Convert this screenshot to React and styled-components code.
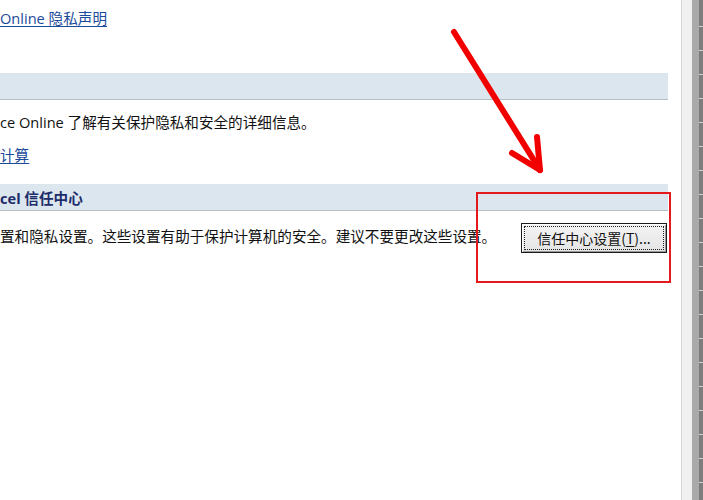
import React from 'react'
import styled, { createGlobalStyle } from 'styled-components'

const GlobalStyle = createGlobalStyle`
  html, body {
    margin: 0;
    padding: 0;
    background: #ffffff;
  }

  body {
    font-family: "Open Sans", "Noto Sans CJK SC", sans-serif;
    color: #111111;
  }
`

const Screen = styled.div`
  position: relative;
  display: flex;
  width: 703px;
  height: 500px;
  overflow: hidden;
  background: #ffffff;
`

const Panel = styled.div`
  display: flex;
  flex-direction: column;
  width: 668px;
  flex-shrink: 0;
  padding-top: 8px;
  box-sizing: border-box;
`

const TextLink = styled.a`
  display: block;
  align-self: flex-start;
  margin-top: ${p => p.$top || 0}px;
  font-size: 14.6px;
  line-height: 20px;
  color: #1b4b9b;
  text-decoration: underline;
  text-underline-offset: 2px;
  cursor: pointer;
  white-space: nowrap;
`

const SectionHeader = styled.div`
  display: flex;
  align-items: center;
  height: 26px;
  margin-top: ${p => p.$top || 0}px;
  background: #dce6ee;
  border-bottom: 1px solid #b6c1ca;
  font-size: 14.6px;
  font-weight: 700;
  color: #1c2c6a;
  white-space: nowrap;
`

const Paragraph = styled.div`
  margin-top: ${p => p.$top || 0}px;
  font-size: 14.6px;
  line-height: 20px;
  white-space: nowrap;
`

const SettingRow = styled.div`
  display: flex;
  align-items: center;
  justify-content: space-between;
  margin-top: 12px;
  padding-right: 1px;
`

const RowText = styled.span`
  font-size: 14.6px;
  line-height: 20px;
  white-space: nowrap;
  margin-top: -4px;
`

const DialogButton = styled.button`
  position: relative;
  width: 146px;
  height: 30px;
  padding: 0;
  border: 1px solid #1a1a1a;
  box-shadow: inset 1px 1px 0 #ffffff, inset -1px -1px 0 #9a9a9a;
  background: linear-gradient(#f4f4f4, #e4e4e4);
  font-family: "Noto Sans CJK SC", sans-serif;
  font-size: 14px;
  color: #111111;
  cursor: pointer;

  &::after {
    content: '';
    position: absolute;
    inset: 2px;
    border: 1px dotted #222222;
    pointer-events: none;
  }

  u {
    text-underline-offset: 2px;
  }
`

const Gutter = styled.div`
  width: 13px;
  flex-shrink: 0;
  border-right: 1px solid #d6d6d6;
`

const Splitter = styled.div`
  width: 10px;
  flex-shrink: 0;
  background: #f0f0f0;
`

const SplitBar = styled.div`
  width: 7px;
  flex-shrink: 0;
  background: #a9a9a9;
`

const SheetEdge = styled.div`
  flex: 1;
  background-color: #7d7d7d;
  background-image: repeating-linear-gradient(
    to bottom,
    transparent 0px,
    transparent 23px,
    #d0d0d0 23px,
    #d0d0d0 24px
  );
  background-position: 0 3px;
`

const Annotation = styled.svg`
  position: absolute;
  left: 0;
  top: 0;
  pointer-events: none;
`

const App = () => (
  <>
    <GlobalStyle />
    <Screen>
      <Panel>
        <TextLink>Online 隐私声明</TextLink>

        <SectionHeader $top={45} />

        <Paragraph $top={12}>ce Online 了解有关保护隐私和安全的详细信息。</Paragraph>
        <TextLink $top={13}>计算</TextLink>

        <SectionHeader $top={19}>cel 信任中心</SectionHeader>

        <SettingRow>
          <RowText>置和隐私设置。这些设置有助于保护计算机的安全。建议不要更改这些设置。</RowText>
          <DialogButton>
            信任中心设置(<u>T</u>)...
          </DialogButton>
        </SettingRow>
      </Panel>

      <Gutter />
      <Splitter />
      <SplitBar />
      <SheetEdge />

      <Annotation width="703" height="500" viewBox="0 0 703 500">
        <rect x="477" y="193" width="193" height="89" fill="none" stroke="#e3191c" strokeWidth="2" />
        <g stroke="#f20000" strokeWidth="6" strokeLinecap="round" strokeLinejoin="round" fill="none">
          <line x1="454" y1="32" x2="540" y2="170" />
          <line x1="512" y1="153" x2="540" y2="170" />
          <line x1="537" y1="137" x2="540" y2="170" />
        </g>
      </Annotation>
    </Screen>
  </>
)

export default App
